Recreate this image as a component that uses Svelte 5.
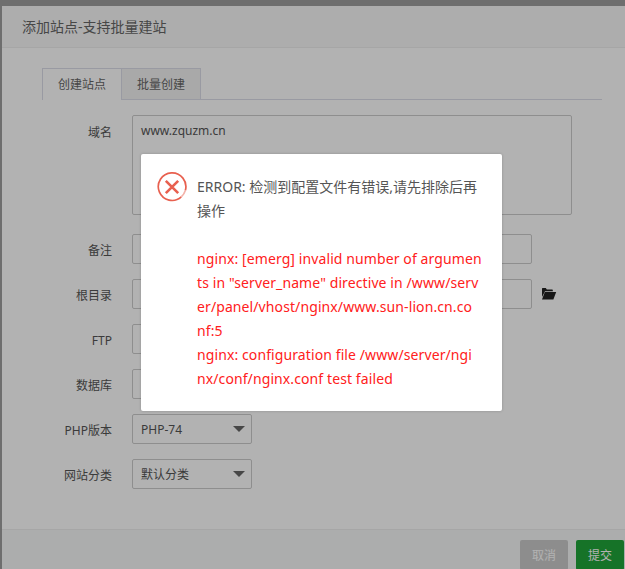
<script>
  const messageLines = [
    'nginx: [emerg] invalid number of argumen',
    'ts in "server_name" directive in /www/serv',
    'er/panel/vhost/nginx/www.sun-lion.cn.co',
    'nf:5',
    'nginx: configuration file /www/server/ngi',
    'nx/conf/nginx.conf test failed'
  ];
</script>

<div class="page" lang="zh-CN">
  <div class="dialog">
    <header class="dialog-title">添加站点-支持批量建站</header>

    <div class="dialog-body">
      <div class="tabs">
        <span class="tab active">创建站点</span>
        <span class="tab">批量创建</span>
      </div>

      <div class="row textarea-row">
        <span class="label">域名</span>
        <div class="textarea">www.zquzm.cn</div>
      </div>
      <div class="row">
        <span class="label">备注</span>
        <div class="input"></div>
      </div>
      <div class="row">
        <span class="label">根目录</span>
        <div class="input"></div>
        <svg class="folder" width="16" height="14" viewBox="0 0 16 14" aria-hidden="true">
          <path d="M1 4.5V1.6C1 1.2 1.3 1 1.6 1h3.2l1 1.4h5.4c.4 0 .6.2.6.6v1.2H4L1 10z" fill="#222" />
          <path d="M3.8 5h11.4l-2.8 7.6H1z" fill="#222" />
        </svg>
      </div>
      <div class="row">
        <span class="label">FTP</span>
        <div class="select"></div>
      </div>
      <div class="row">
        <span class="label">数据库</span>
        <div class="select"></div>
      </div>
      <div class="row">
        <span class="label">PHP版本</span>
        <div class="select">PHP-74<i class="caret"></i></div>
      </div>
      <div class="row">
        <span class="label">网站分类</span>
        <div class="select">默认分类<i class="caret"></i></div>
      </div>
    </div>

    <footer class="dialog-footer">
      <button type="button" class="btn cancel">取消</button>
      <button type="button" class="btn submit">提交</button>
    </footer>
  </div>

  <div class="shade"></div>

  <div class="msg">
    <svg class="msg-icon" width="30" height="30" viewBox="0 0 32 32" aria-hidden="true">
      <path d="M25.9 26.6A14.7 14.7 0 1 1 30.2 19.8" fill="none" stroke="#e8604f" stroke-width="1.8" />
      <path d="M25.9 26.6A14.7 14.7 0 0 0 30.2 19.8" fill="none" stroke="#f3b3aa" stroke-width="1.8" />
      <path d="M9.4 9.4l13.2 13.2M22.6 9.4L9.4 22.6" fill="none" stroke="#e8604f" stroke-width="2.8" />
    </svg>
    <div class="msg-text">
      <p class="msg-head">ERROR: 检测到配置文件有错误,请先排除后再<br />操作</p>
      <p class="msg-detail">
        {#each messageLines as line}
          <span>{line}</span>
        {/each}
      </p>
    </div>
  </div>
</div>

<style>
  :global(body) {
    margin: 0;
    background: #9e9e9e;
  }

  .page {
    position: relative;
    width: 625px;
    height: 569px;
    overflow: hidden;
    padding: 6px 0 0 2px;
    box-sizing: border-box;
    font-family: "Noto Sans", "Noto Sans CJK SC", sans-serif;
    color: #555;
  }

  .dialog {
    display: flex;
    flex-direction: column;
    height: 563px;
    width: 640px;
    background: #fff;
  }

  .dialog-title {
    height: 41px;
    line-height: 41px;
    padding-left: 20px;
    font-size: 14px;
    color: #666;
    background: #f8f8f8;
    border-bottom: 1px solid #eee;
    flex-shrink: 0;
  }

  .dialog-body {
    flex: 1;
    padding: 20px 0 0 40px;
  }

  .tabs {
    display: flex;
    width: 560px;
    height: 32px;
    box-sizing: border-box;
    border-bottom: 1px solid #dcdde8;
    margin-bottom: 15px;
  }

  .tab {
    width: 79px;
    height: 32px;
    box-sizing: border-box;
    line-height: 32px;
    text-align: center;
    font-size: 12px;
    color: #666;
    background: #f2f2f2;
    border: 1px solid #dcdde8;
    border-left: 0;
  }

  .tab.active {
    width: 80px;
    background: #fff;
    border-left: 1px solid #dcdde8;
    border-bottom: 0;
  }

  .row {
    display: flex;
    align-items: center;
    height: 30px;
    margin-bottom: 15px;
  }

  .textarea-row {
    align-items: flex-start;
    height: 100px;
    margin-bottom: 19px;
  }

  .label {
    width: 70px;
    margin-right: 20px;
    padding-top: 3px;
    text-align: right;
    font-size: 12px;
    color: #555;
    line-height: 30px;
    flex-shrink: 0;
  }

  .textarea {
    width: 440px;
    height: 100px;
    box-sizing: border-box;
    padding: 5px 8px;
    font-size: 12px;
    line-height: 20px;
    color: #555;
    border: 1px solid #ccc;
    border-radius: 2px;
  }

  .input {
    width: 400px;
    height: 30px;
    box-sizing: border-box;
    border: 1px solid #ccc;
    border-radius: 2px;
  }

  .folder {
    margin-left: 9px;
  }

  .select {
    position: relative;
    width: 120px;
    height: 30px;
    box-sizing: border-box;
    padding-left: 8px;
    line-height: 30px;
    font-size: 12px;
    color: #555;
    border: 1px solid #ccc;
    border-radius: 2px;
  }

  .caret {
    position: absolute;
    right: 6px;
    top: 11px;
    border-style: solid;
    border-width: 6px 6px 0;
    border-color: #666 transparent transparent;
  }

  .dialog-footer {
    display: flex;
    gap: 8px;
    height: 40px;
    box-sizing: border-box;
    padding: 10px 0 0 518px;
    background: #f6f8f8;
    border-top: 1px solid #eee;
    flex-shrink: 0;
  }

  .btn {
    width: 48px;
    height: 30px;
    padding: 0;
    border: 0;
    border-radius: 2px;
    font-family: inherit;
    font-size: 12px;
    color: #fff;
  }

  .cancel {
    background: #cbcbcb;
  }

  .submit {
    background: #20a53a;
  }

  .shade {
    position: absolute;
    inset: 0;
    background: rgba(0, 0, 0, 0.3);
  }

  .msg {
    position: absolute;
    left: 141px;
    top: 154px;
    width: 361px;
    height: 257px;
    box-sizing: border-box;
    display: flex;
    padding: 18px 0 0 16px;
    background: #fff;
    border-radius: 2px;
    box-shadow: 0 0 3px rgba(0, 0, 0, 0.2);
  }

  .msg-icon {
    flex-shrink: 0;
    margin-right: 10px;
  }

  .msg-text {
    font-size: 14px;
    line-height: 24px;
    color: #555;
    white-space: nowrap;
  }

  .msg-head {
    margin: 3px 0 24px;
  }

  .msg-detail {
    margin: 0;
    color: #ff2020;
    letter-spacing: 0.1px;
  }

  .msg-detail span {
    display: block;
  }
</style>
